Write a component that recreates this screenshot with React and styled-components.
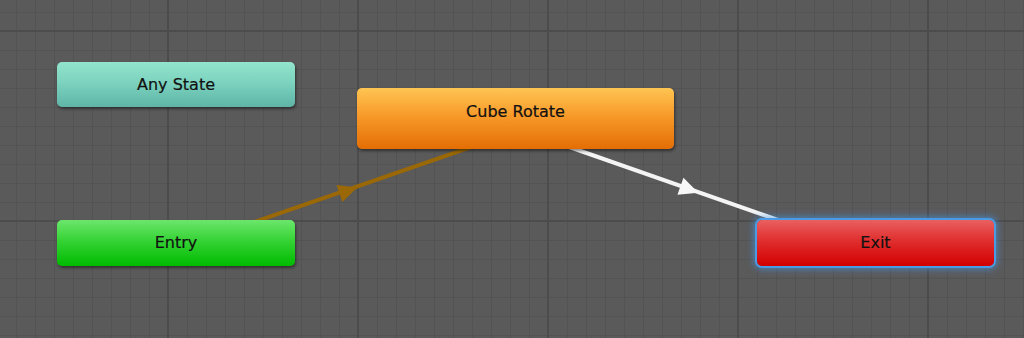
import React from "react";
import styled, { createGlobalStyle, css } from "styled-components";

const Global = createGlobalStyle`
  html, body { margin: 0; padding: 0; background: #5a5a5a; }
  body { overflow: hidden; font-family: "DejaVu Sans", "Liberation Sans", sans-serif; }
`;

const Canvas = styled.div`
  position: relative;
  width: 1024px;
  height: 338px;
  overflow: hidden;
  background-color: #5a5a5a;
  background-image:
    linear-gradient(to right, #4c4c4c 0, #4c4c4c 2px, transparent 2px),
    linear-gradient(to bottom, #4c4c4c 0, #4c4c4c 2px, transparent 2px),
    linear-gradient(to right, #535353 0, #535353 1px, transparent 1px),
    linear-gradient(to bottom, #535353 0, #535353 1px, transparent 1px);
  background-size: 190px 190px, 190px 190px, 19px 19px, 19px 19px;
  background-position: 167px 0, 0 30px, 16px 0, 0 12px;
`;

const Wires = styled.svg`
  position: absolute;
  left: 0;
  top: 0;
  width: 1024px;
  height: 338px;
`;

const variants = {
  any: css`
    background: linear-gradient(to bottom, #92e4cd 0%, #7dd3bf 45%, #5eb5a7 100%);
  `,
  state: css`
    background: linear-gradient(to bottom, #ffc552 0%, #f79a2a 45%, #e46e04 100%);
  `,
  entry: css`
    background: linear-gradient(to bottom, #6ce66c 0%, #35d335 45%, #00bb00 100%);
  `,
  exit: css`
    background: linear-gradient(to bottom, #ea6060 0%, #e02e2e 45%, #d30000 100%);
  `,
};

const Node = styled.div`
  position: absolute;
  left: ${(p) => p.x}px;
  top: ${(p) => p.y}px;
  width: ${(p) => p.w}px;
  height: ${(p) => p.h}px;
  border-radius: 5px;
  display: flex;
  align-items: center;
  justify-content: center;
  font-size: 16px;
  color: #111;
  box-shadow: ${(p) =>
    p.selected
      ? "0 0 0 2px #4a9be4, 0 0 7px 3px rgba(70,150,230,0.7)"
      : "1px 2px 3px rgba(0,0,0,0.45)"};
  ${(p) => variants[p.kind]}
`;

const Label = styled.span`
  line-height: 1;
  margin-top: ${(p) => p.dy || 0}px;
  -webkit-text-stroke: 0.2px #111;
`;

function Arrow({ cx, cy, angle, color }) {
  return (
    <polygon
      points="11,0 -8,-9 -8,9"
      fill={color}
      transform={`translate(${cx} ${cy}) rotate(${angle})`}
    />
  );
}

export default function App() {
  const a1 = (Math.atan2(-70, 203) * 180) / Math.PI;
  const a2 = (Math.atan2(70, 200) * 180) / Math.PI;
  return (
    <>
      <Global />
      <Canvas>
        <Wires viewBox="0 0 1024 338">
          <line x1="176" y1="249" x2="515" y2="132" stroke="#9a6806" strokeWidth="4" />
          <Arrow cx={347} cy={191} angle={a1} color="#9a6806" />
          <line x1="515" y1="128" x2="875" y2="254" stroke="#f4f4f4" strokeWidth="4" />
          <Arrow cx={688} cy={189} angle={a2} color="#f8f8f8" />
        </Wires>
        <Node kind="any" x={57} y={62} w={238} h={45}>
          <Label>Any State</Label>
        </Node>
        <Node kind="state" x={357} y={88} w={317} h={61}>
          <Label dy={-14}>Cube Rotate</Label>
        </Node>
        <Node kind="entry" x={57} y={220} w={238} h={46}>
          <Label>Entry</Label>
        </Node>
        <Node kind="exit" x={757} y={220} w={237} h={46} selected>
          <Label>Exit</Label>
        </Node>
      </Canvas>
    </>
  );
}
